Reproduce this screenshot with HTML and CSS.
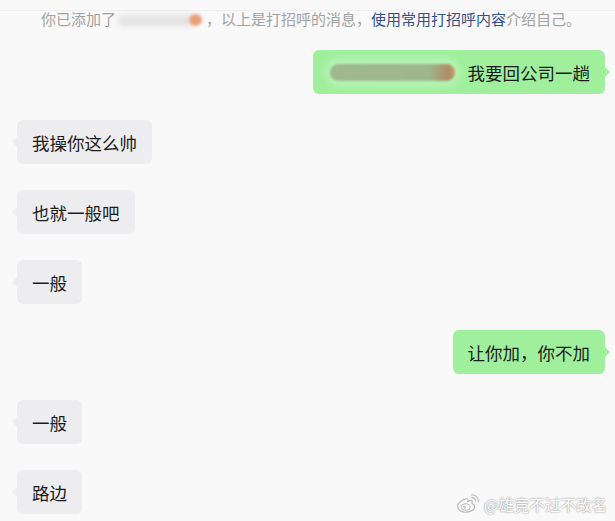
FILE: index.html
```html
<!DOCTYPE html>
<html lang="zh-CN">
<head>
    <meta charset="UTF-8">
    <meta name="viewport" content="width=device-width, initial-scale=1.0">
    <title>聊天</title>
    <link rel="stylesheet" href="styles.css">
</head>
<body>
    <div class="chat">
        <!-- System notice after adding a contact -->
        <div class="notice">
            你已添加了<span class="masked"><span class="masked-dot"></span></span>，以上是打招呼的消息，<a class="notice-link">使用常用打招呼内容</a>介绍自己。
        </div>

        <div class="messages">
            <div class="row mine">
                <div class="bubble"><span class="smudge"></span>我要回公司一趟</div>
            </div>
            <div class="row theirs">
                <div class="bubble">我操你这么帅</div>
            </div>
            <div class="row theirs">
                <div class="bubble">也就一般吧</div>
            </div>
            <div class="row theirs">
                <div class="bubble">一般</div>
            </div>
            <div class="row mine">
                <div class="bubble">让你加，你不加</div>
            </div>
            <div class="row theirs">
                <div class="bubble">一般</div>
            </div>
            <div class="row theirs">
                <div class="bubble">路边</div>
            </div>
        </div>
    </div>

    <!-- Share watermark -->
    <div class="watermark">
        <svg class="weibo" width="24" height="20" viewBox="0 0 24 20">
            <path d="M9.5 5.2C5.6 5.6 1.5 9 1.6 12.6c.1 3.6 4.4 5.9 8.8 5.6 5-.3 8.6-3.1 8.3-5.9-.2-1.6-1.6-2.3-2.8-2.6.7-1.3.5-2.6-.5-3-1-.4-2.6.2-3.6.8.4-1.2.1-2.2-.8-2.5-.5-.1-1-.1-1.5.2z" fill="#fff" stroke="#b9b9b9" stroke-width="1.2"/>
            <ellipse cx="9.6" cy="13" rx="4.6" ry="3.2" fill="#fff" stroke="#b9b9b9" stroke-width="1.1"/>
            <circle cx="8.6" cy="13.4" r="1.3" fill="#c4c4c4"/>
            <path d="M15.8 3.6a3.4 3.4 0 0 1 3.8 3.6" fill="none" stroke="#c0c0c0" stroke-width="1.3" stroke-linecap="round"/>
            <path d="M15.6 0.9a6.2 6.2 0 0 1 6.8 6.6" fill="none" stroke="#c0c0c0" stroke-width="1.3" stroke-linecap="round"/>
        </svg>
        <span class="watermark-text">@雄竞不过不改名</span>
    </div>
</body>
</html>
```

FILE: styles.css
```css
body {
    margin: 0;
    background-color: #f9f9f9;
    font-family: "Noto Sans CJK SC", "Noto Sans", sans-serif;
    color: #1b1b1b;
    width: 615px;
    height: 521px;
    overflow: hidden;
    position: relative;
}
.chat {
    display: flex;
    flex-direction: column;
}
.notice {
    margin-top: 10px;
    border-top: 1px solid #efefef;
    height: 39px;
    padding-left: 7px;
    font-size: 15px;
    line-height: 15px;
    color: #a2a2a2;
    text-align: center;
    white-space: nowrap;
}
.notice-link {
    color: #33508a;
}
.masked {
    display: inline-block;
    position: relative;
    width: 90px;
    height: 14px;
    vertical-align: -2px;
}
.masked::before {
    content: "";
    position: absolute;
    left: 2px;
    right: 14px;
    top: 2px;
    bottom: 1px;
    background-color: #e2e2e2;
    filter: blur(3px);
}
.masked-dot {
    position: absolute;
    right: 4px;
    top: 1px;
    width: 13px;
    height: 12px;
    border-radius: 50%;
    background-color: #e8a27a;
    filter: blur(1.8px);
}
.messages {
    display: flex;
    flex-direction: column;
    gap: 26px;
    padding: 0 10px 0 17px;
}
.row {
    display: flex;
}
.row.mine {
    justify-content: flex-end;
}
.bubble {
    position: relative;
    display: flex;
    align-items: center;
    height: 44px;
    padding: 0 15px;
    border-radius: 6px;
    font-size: 17.5px;
    white-space: nowrap;
}
.theirs .bubble {
    background-color: #ededef;
}
.mine .bubble {
    background-color: #9fef9c;
}
.bubble::after {
    content: "";
    position: absolute;
    top: 17px;
    border-top: 5px solid transparent;
    border-bottom: 5px solid transparent;
}
.theirs .bubble::after {
    left: -5px;
    border-right: 5px solid #ededef;
}
.mine .bubble::after {
    right: -5px;
    border-left: 5px solid #9fef9c;
}
.smudge {
    width: 125px;
    height: 17px;
    margin: 0 13px 0 2px;
    border-radius: 9px;
    background: linear-gradient(90deg, #9fb98f 0%, #9eb68c 80%, #b08c64 95%, #c59a6c 100%);
    box-shadow: 0 0 9px 5px rgba(255, 255, 255, 0.3);
    filter: blur(1.2px);
}
.watermark {
    position: absolute;
    right: 8px;
    bottom: 6px;
    display: flex;
    align-items: center;
    gap: 4px;
}
.watermark-text {
    font-size: 15.5px;
    color: #ffffff;
    text-shadow: 0 0 2px #9a9a9a, 0 0 1px #9a9a9a;
}
```
